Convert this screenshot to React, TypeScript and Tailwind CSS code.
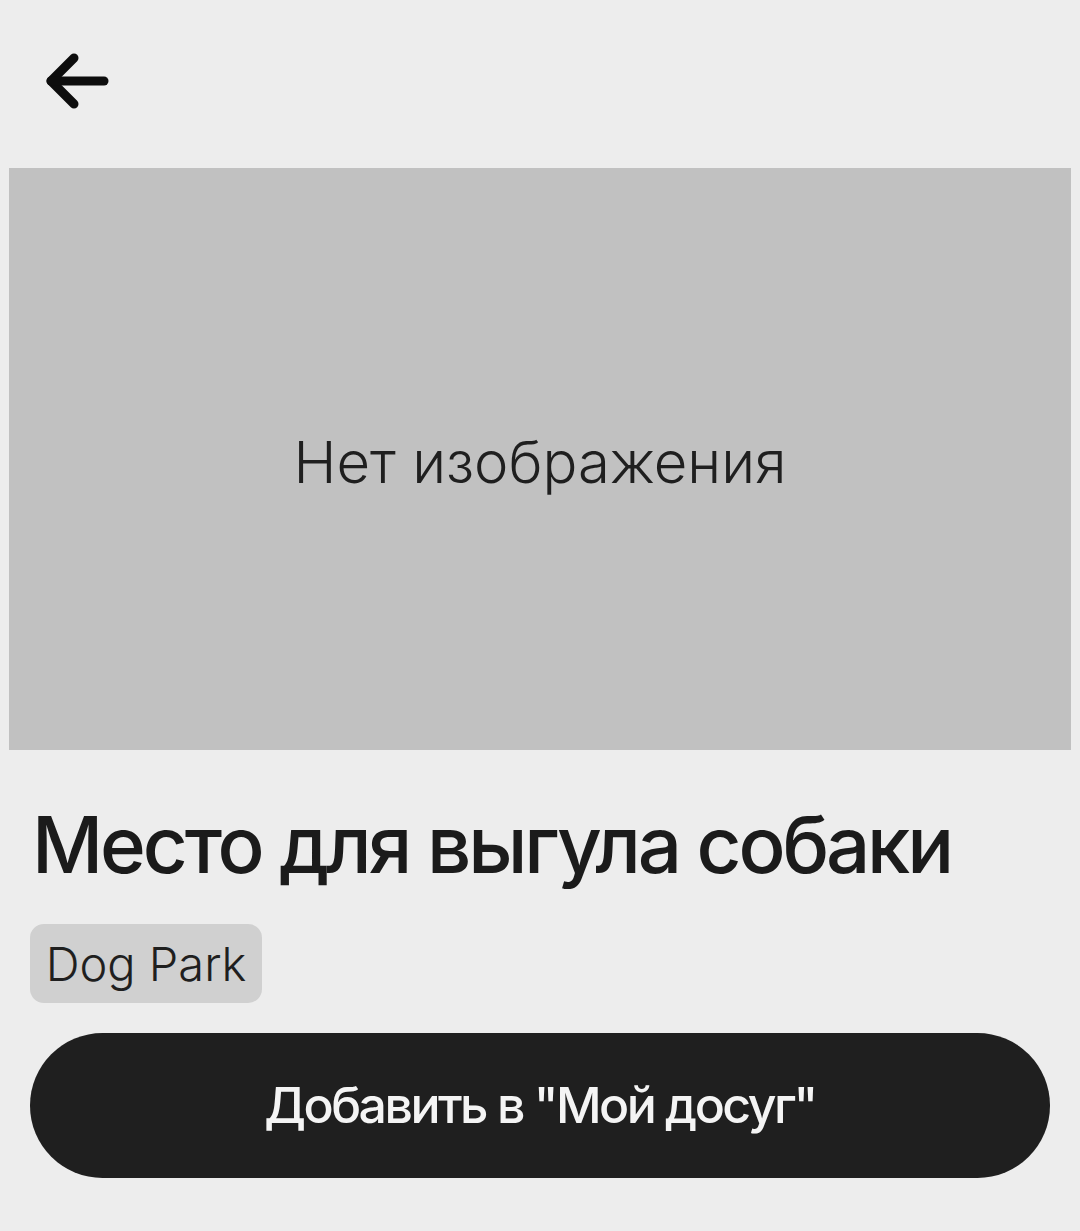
export default function App() {
  return (
    <div className="min-h-screen w-full bg-[#ededed] text-[#1d1d1d]" style={{ fontFamily: "Inter, 'Noto Sans', sans-serif" }}>
      {/* header */}
      <header className="h-[168px] pl-[42px] pt-[48px]">
        <button className="block">
          <svg width="72" height="66" viewBox="0 0 72 66" fill="none" stroke="#0d0d0d" strokeWidth="9" strokeLinecap="round" strokeLinejoin="round">
            <path d="M32 10 9 33l23 23" />
            <path d="M9 33h53" />
          </svg>
        </button>
      </header>

      {/* image placeholder */}
      <div className="mx-[9px] flex h-[582px] items-center justify-center bg-[#c1c1c1]">
        <span className="mt-[6px] text-[58px] font-light leading-none text-[#1f1f1f]">Нет изображения</span>
      </div>

      {/* details */}
      <section className="px-[30px] pt-[56px]">
        <h1 className="pl-[2px] text-[78px] font-medium leading-none tracking-[-0.04em] text-[#1b1b1b]">
          Место для выгула собаки
        </h1>
        <div className="mt-[40px] flex">
          <span className="flex h-[79px] w-[232px] items-center justify-center rounded-[14px] bg-[#d0d0d0] text-[47px] font-light leading-none text-[#1f1f1f]">
            Dog Park
          </span>
        </div>
        <button className="mt-[30px] flex h-[145px] w-full items-center justify-center rounded-full bg-[#1f1f1f] text-[50px] font-medium tracking-[-0.05em] text-[#f4f4f4]">
          Добавить в "Мой досуг"
        </button>
      </section>
    </div>
  );
}
